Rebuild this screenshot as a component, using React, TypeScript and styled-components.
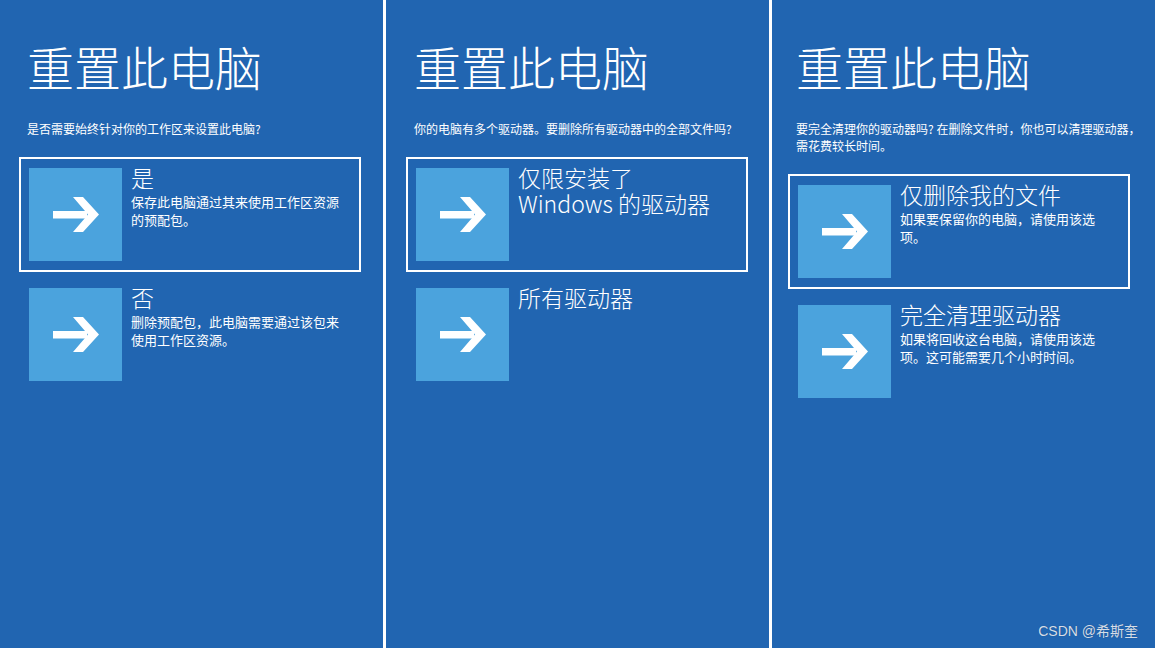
import React from 'react';
import styled, { createGlobalStyle } from 'styled-components';

const GlobalStyle = createGlobalStyle`
  html, body {
    margin: 0;
    padding: 0;
    background: #2165b1;
  }
  body {
    font-family: "Noto Sans CJK SC", "Noto Sans", sans-serif;
    color: #ffffff;
  }
`;

const Screen = styled.div`
  position: relative;
  display: flex;
  width: 1155px;
  height: 648px;
  overflow: hidden;
  background: #2165b1;
`;

const Panel = styled.section<{ $inset: number; $first?: boolean }>`
  flex: none;
  box-sizing: border-box;
  width: ${p => (p.$first ? 383 : 386)}px;
  display: flex;
  flex-direction: column;
  padding: 38px 0 0 ${p => p.$inset}px;
  border-left: ${p => (p.$first ? 'none' : '3px solid #ffffff')};
  overflow: hidden;
`;

const Header = styled.div`
  padding-left: 8px;
`;

const Title = styled.h1`
  margin: 0;
  font-size: 47px;
  line-height: 1.2;
  font-weight: 300;
  white-space: nowrap;
`;

const Subtitle = styled.p`
  margin: 26px 0 0;
  font-size: 12px;
  line-height: 17px;
  white-space: pre;
`;

const OptionList = styled.div`
  display: flex;
  flex-direction: column;
  gap: 5px;
  margin-top: 20px;
`;

const Option = styled.div<{ $selected?: boolean }>`
  display: flex;
  gap: 9px;
  width: 342px;
  box-sizing: border-box;
  padding: 9px 8px;
  border: 2px solid ${p => (p.$selected ? '#ffffff' : 'transparent')};
  cursor: pointer;
`;

const Tile = styled.div`
  flex: none;
  width: 93px;
  height: 93px;
  display: flex;
  align-items: center;
  justify-content: center;
  background: #4ba3dd;
`;

const OptionText = styled.div`
  margin-top: -4px;
  min-width: 0;
`;

const OptionTitle = styled.div`
  font-size: 23px;
  line-height: 26px;
  font-weight: 300;
  white-space: pre;
`;

const OptionDesc = styled.div`
  margin-top: 3px;
  font-size: 13px;
  line-height: 18px;
  white-space: pre;
`;

const Watermark = styled.div`
  position: absolute;
  right: 17px;
  bottom: 8px;
  font-family: "Liberation Sans", "Noto Sans CJK SC", sans-serif;
  font-size: 14px;
  color: #d5dde8;
  text-shadow: 0 0 1px rgba(0, 0, 0, 0.25);
`;

const Arrow = () => (
  <svg width="46" height="35" viewBox="0 0 46 35">
    <rect x="0" y="14" width="34" height="7.5" fill="#ffffff" />
    <polygon points="20,0 30,0 46,17.5 30,35 20,35 35,17.5" fill="#ffffff" />
  </svg>
);

interface OptionData {
  title: string;
  desc?: string;
  selected?: boolean;
}

interface PanelData {
  inset: number;
  question: string;
  options: OptionData[];
}

const panels: PanelData[] = [
  {
    inset: 19,
    question: '是否需要始终针对你的工作区来设置此电脑?',
    options: [
      { title: '是', desc: '保存此电脑通过其来使用工作区资源\n的预配包。', selected: true },
      { title: '否', desc: '删除预配包，此电脑需要通过该包来\n使用工作区资源。' },
    ],
  },
  {
    inset: 20,
    question: '你的电脑有多个驱动器。要删除所有驱动器中的全部文件吗?',
    options: [
      { title: '仅限安装了\nWindows 的驱动器', selected: true },
      { title: '所有驱动器' },
    ],
  },
  {
    inset: 16,
    question: '要完全清理你的驱动器吗? 在删除文件时，你也可以清理驱动器，\n需花费较长时间。',
    options: [
      { title: '仅删除我的文件', desc: '如果要保留你的电脑，请使用该选\n项。', selected: true },
      { title: '完全清理驱动器', desc: '如果将回收这台电脑，请使用该选\n项。这可能需要几个小时时间。' },
    ],
  },
];

function App() {
  return (
    <>
      <GlobalStyle />
      <Screen>
        {panels.map((panel, i) => (
          <Panel key={i} $inset={panel.inset} $first={i === 0}>
            <Header>
              <Title>重置此电脑</Title>
              <Subtitle>{panel.question}</Subtitle>
            </Header>
            <OptionList>
              {panel.options.map(opt => (
                <Option key={opt.title} $selected={opt.selected}>
                  <Tile>
                    <Arrow />
                  </Tile>
                  <OptionText>
                    <OptionTitle>{opt.title}</OptionTitle>
                    {opt.desc && <OptionDesc>{opt.desc}</OptionDesc>}
                  </OptionText>
                </Option>
              ))}
            </OptionList>
          </Panel>
        ))}
        <Watermark>CSDN @希斯奎</Watermark>
      </Screen>
    </>
  );
}

export default App;
